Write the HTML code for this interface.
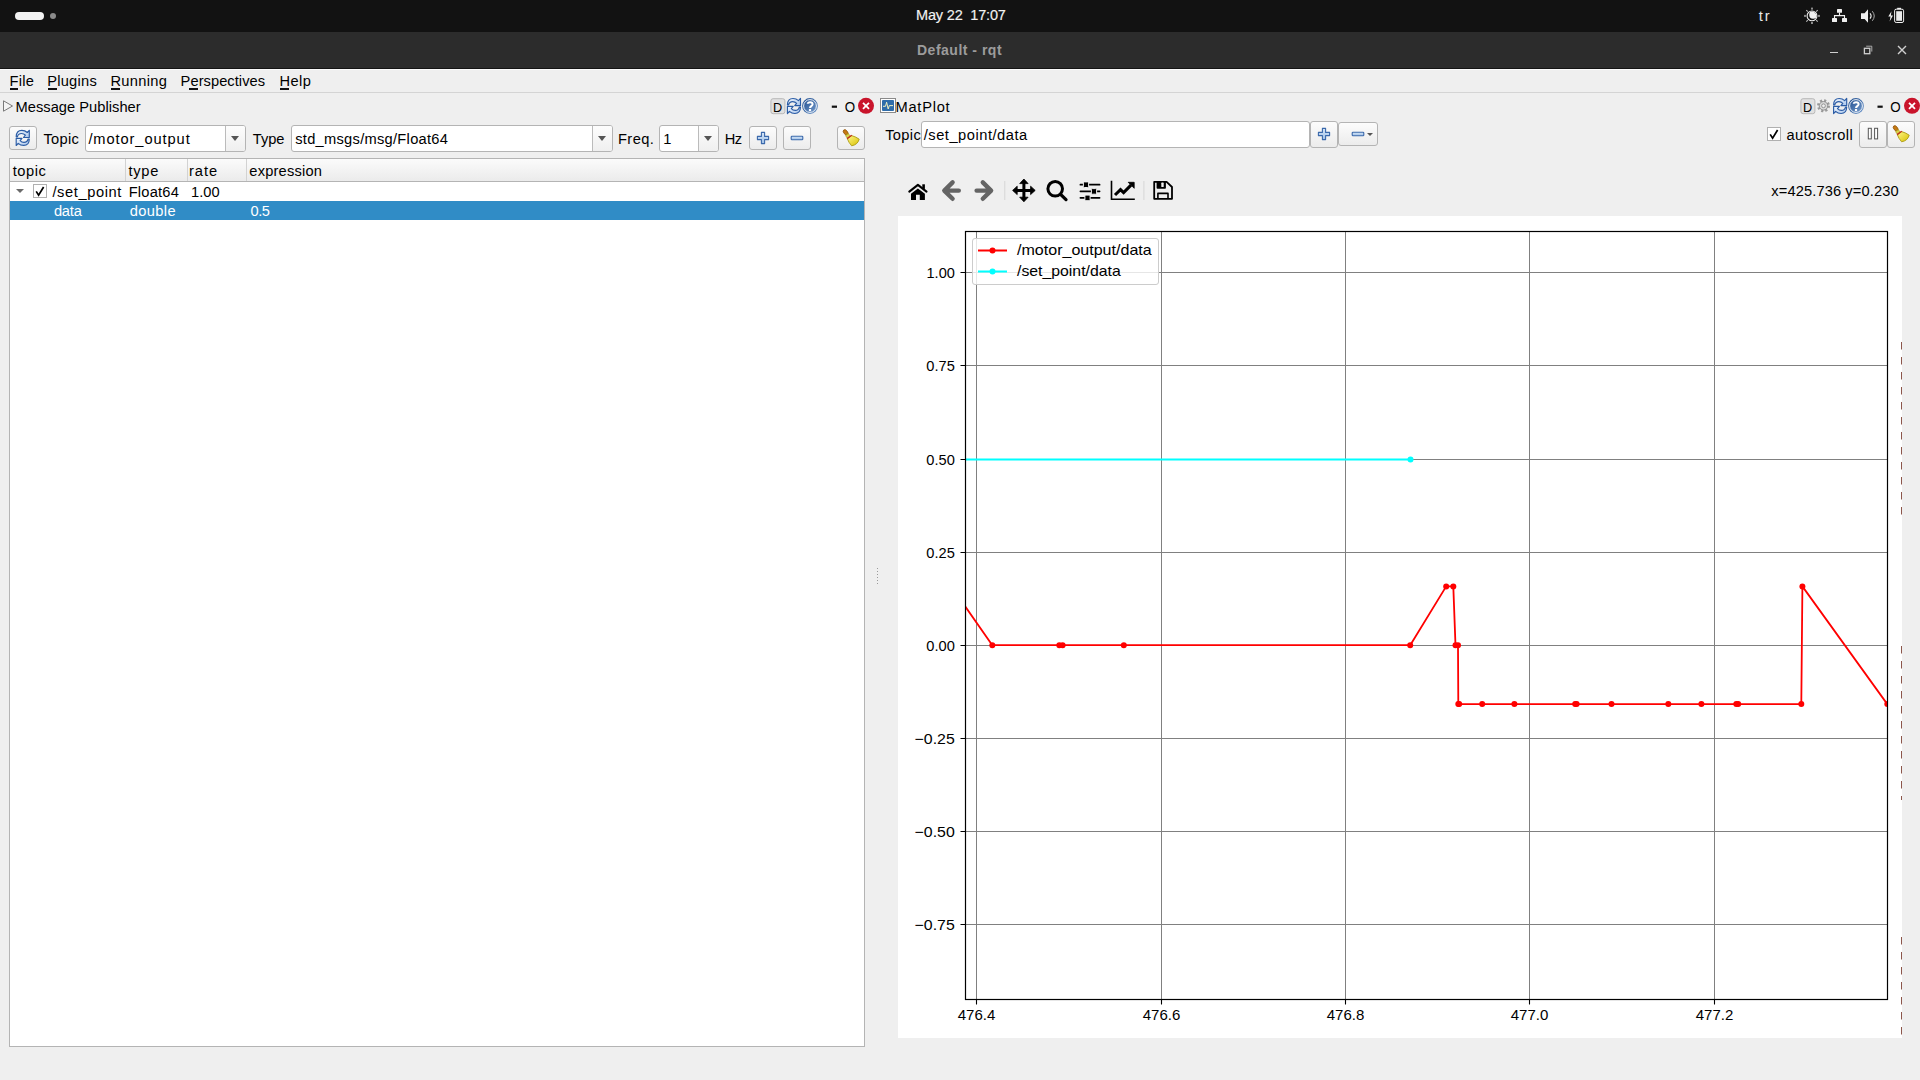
<!DOCTYPE html>
<html><head><meta charset="utf-8">
<style>
*{margin:0;padding:0;box-sizing:border-box}
html,body{width:1920px;height:1080px;overflow:hidden;background:#efefef;font-family:"Liberation Sans",sans-serif;color:#000}
.a{position:absolute}
.t{position:absolute;white-space:nowrap;line-height:1;font-family:"Liberation Sans",sans-serif}
.btn{position:absolute;border:1px solid #b4b4b4;border-radius:3px;background:linear-gradient(#fcfcfc,#ececec)}
.combo{position:absolute;border:1px solid #b4b4b4;border-radius:3px;background:#fff}
.combo .dd{position:absolute;right:0;top:0;bottom:0;width:20px;border-left:1px solid #bbbbbb;background:linear-gradient(#fdfdfd,#efefef);border-radius:0 2px 2px 0}
.arr{position:absolute;width:0;height:0;border-left:4px solid transparent;border-right:4px solid transparent;border-top:5px solid #555}
.ul{position:absolute;height:2px;background:#111;top:88px}
</style></head><body>
<!-- top bar -->
<div class="a" style="left:0;top:0;width:1920px;height:32px;background:#121212"></div>
<div class="a" style="left:15px;top:12px;width:29px;height:8px;border-radius:4px;background:#f2f2f2"></div>
<div class="a" style="left:50px;top:13px;width:6px;height:6px;border-radius:3px;background:#8a8a8a"></div>
<svg class="a" style="left:1796px;top:0" width="124" height="32" viewBox="1796 0 124 32">
<g fill="#8c8c8c"><rect x="1811" y="7.6" width="2" height="2"/><rect x="1811" y="22" width="2" height="2"/><rect x="1804" y="14.9" width="2" height="2"/><rect x="1818" y="14.9" width="2" height="2"/></g>
<path d="M1806.3 10.1L1807.8 11.6M1817.7 10.1L1816.2 11.6M1806.3 21.6L1807.8 20.1M1817.7 21.6L1816.2 20.1" stroke="#bdbdbd" stroke-width="1.1"/>
<circle cx="1812" cy="15.9" r="4.9" fill="none" stroke="#f0f0f0" stroke-width="1.1"/>
<defs><clipPath id="mc"><circle cx="1812" cy="15.9" r="4.3"/></clipPath></defs><g clip-path="url(#mc)"><circle cx="1813.1" cy="14.8" r="3.9" fill="#f0f0f0"/></g>
<g fill="#f0f0f0"><rect x="1837" y="9" width="5" height="3.8" rx="0.6"/><rect x="1832" y="18" width="5" height="4" rx="0.6"/><rect x="1842" y="18" width="5" height="4" rx="0.6"/></g>
<path d="M1839.5 12.5V15.6M1834.5 18.5V15.6H1844.5V18.5" fill="none" stroke="#f0f0f0" stroke-width="1.1"/>
<path d="M1861 13.2H1864.6L1868 9.2V22.8L1864.6 18.9H1861Z" fill="#f0f0f0"/>
<path d="M1870 13.4Q1872.2 16 1870 18.6" fill="none" stroke="#f0f0f0" stroke-width="1.1"/>
<path d="M1872.3 11.2Q1876.2 16 1872.3 20.8" fill="none" stroke="#a8a8a8" stroke-width="1"/>
<path d="M1891.5 11.2L1888.3 16.6H1890.6L1889.6 21.5L1893 15.6H1890.8Z" fill="#f0f0f0"/>
<rect x="1894.6" y="9.2" width="9" height="13.3" rx="1.6" fill="none" stroke="#f0f0f0" stroke-width="1"/>
<rect x="1897.2" y="7.8" width="3.8" height="1.4" fill="#f0f0f0"/>
<rect x="1896.2" y="11.2" width="5.8" height="9.6" fill="#ececec"/>
</svg>

<!-- title bar -->
<div class="a" style="left:0;top:32px;width:1920px;height:36px;background:#2c2c2c"></div>
<div class="a" style="left:0;top:68px;width:1920px;height:1px;background:#141414"></div>
<div class="a" style="left:0;top:69px;width:1920px;height:1px;background:#fbfbfb"></div>
<div class="a" style="left:1830px;top:51.8px;width:8.2px;height:1.4px;background:#d0d0d0"></div>
<svg class="a" style="left:1860px;top:43px" width="16" height="14" viewBox="0 0 16 14"><rect x="4.4" y="5.3" width="5.4" height="5.4" fill="none" stroke="#d0d0d0" stroke-width="1.3"/><path d="M6.2 3.2H11.8V8.6" fill="none" stroke="#b8b8b8" stroke-width="0.9"/></svg>
<svg class="a" style="left:1894px;top:42px" width="16" height="16" viewBox="0 0 16 16"><path d="M4 4L12 12M12 4L4 12" stroke="#d0d0d0" stroke-width="1.4"/></svg>
<!-- menu separator -->
<div class="a" style="left:0;top:92px;width:1920px;height:1px;background:#d4d4d4"></div>
<div class="ul" style="left:10px;width:8px"></div>
<div class="ul" style="left:48px;width:9px"></div>
<div class="ul" style="left:111px;width:9px"></div>
<div class="ul" style="left:189px;width:9px"></div>
<div class="ul" style="left:280px;width:9px"></div>

<!-- left dock title -->
<svg class="a" style="left:2px;top:99px" width="12" height="14" viewBox="0 0 12 14"><path d="M1.5 1.8L10.5 7L1.5 12.2Z" fill="#f4f4f4" stroke="#7a7a7a" stroke-width="1"/></svg>
<svg class="a" style="left:760px;top:94px" width="1160" height="24" viewBox="760 94 1160 24">
<defs><linearGradient id="rg" x1="0" y1="0" x2="1" y2="1"><stop offset="0" stop-color="#f2f7fd"/><stop offset="1" stop-color="#a9c6ec"/></linearGradient><linearGradient id="hg" x1="0" y1="0" x2="1" y2="1"><stop offset="0" stop-color="#1c4a8c"/><stop offset="1" stop-color="#7aa0d0"/></linearGradient></defs>
<rect x="770.9" y="98.7" width="14" height="15" rx="2.2" fill="#e1e1e1" stroke="#b8b8b8" stroke-width="1"/>
<text x="773.0" y="111.60000000000001" font-family="Liberation Sans" font-size="13.6" textLength="9.2" lengthAdjust="spacingAndGlyphs" fill="#000">D</text>
<g transform="translate(787 98) scale(1.0)" stroke="#2b5ca5" stroke-width="1.15" stroke-linejoin="round" fill="url(#rg)">
<path d="M0.4 6.9C0.5 2.2 3.2 0.5 6 0.5C8.6 0.5 10.3 1.5 11.5 2.6L13.5 0.4V7.6H7.7L9.6 5.3C8.6 4.2 7.3 3.6 5.7 3.6C3.5 3.6 2.1 4.8 1.6 6.9Z"/>
<path d="M13.5 9.1C13.4 13.8 10.7 15.5 7.9 15.5C5.3 15.5 3.6 14.5 2.4 13.4L0.4 15.6V8.4H6.2L4.3 10.7C5.3 11.8 6.6 12.4 8.2 12.4C10.4 12.4 11.8 11.2 12.3 9.1Z"/>
</g>
<circle cx="810" cy="106" r="7.9" fill="url(#hg)"/>
<circle cx="810" cy="106" r="6.4" fill="none" stroke="#fff" stroke-width="0.9"/>
<path d="M807.7 103.8C807.7 101.7 812.6 101.5 812.6 104.2C812.6 106 810 106.2 810 108" fill="none" stroke="#fff" stroke-width="2"/>
<rect x="808.9" y="109" width="2.2" height="2.1" fill="#fff"/>
<rect x="831.8" y="105.6" width="5.2" height="2.2" fill="#111"/>
<text x="844.7" y="111.9" font-family="Liberation Sans" font-size="14.2" textLength="10.4" lengthAdjust="spacingAndGlyphs" fill="#000">O</text>
<circle cx="866" cy="105.8" r="8" fill="#c9142b"/>
<path d="M863 102.8L869 108.8M869 102.8L863 108.8" stroke="#fff" stroke-width="1.8"/>
<rect x="880.5" y="98.5" width="15" height="14" fill="#fff" stroke="#8a8a8a" stroke-width="1"/>
<rect x="882" y="100" width="12" height="11" rx="1" fill="#2f6daa"/>
<path d="M883 106.3H885.5L886.6 102.2L888.2 109L889.3 105.6H893" fill="none" stroke="#f0f0c0" stroke-width="1"/>
<rect x="1800.9" y="98.7" width="14" height="15" rx="2.2" fill="#e1e1e1" stroke="#b8b8b8" stroke-width="1"/>
<text x="1803.0" y="111.60000000000001" font-family="Liberation Sans" font-size="13.6" textLength="9.2" lengthAdjust="spacingAndGlyphs" fill="#000">D</text>
<circle cx="1823.5" cy="105.8" r="5.3" fill="none" stroke="#9a9a9a" stroke-width="2.4" stroke-dasharray="2.1 2.06"/>
<circle cx="1823.5" cy="105.8" r="4.3" fill="#d8d8d8" stroke="#8e8e8e" stroke-width="1"/>
<circle cx="1823.5" cy="105.8" r="1.9" fill="#efefef" stroke="#8e8e8e" stroke-width="0.9"/>
<g transform="translate(1833.2 98) scale(1.0)" stroke="#2b5ca5" stroke-width="1.15" stroke-linejoin="round" fill="url(#rg)">
<path d="M0.4 6.9C0.5 2.2 3.2 0.5 6 0.5C8.6 0.5 10.3 1.5 11.5 2.6L13.5 0.4V7.6H7.7L9.6 5.3C8.6 4.2 7.3 3.6 5.7 3.6C3.5 3.6 2.1 4.8 1.6 6.9Z"/>
<path d="M13.5 9.1C13.4 13.8 10.7 15.5 7.9 15.5C5.3 15.5 3.6 14.5 2.4 13.4L0.4 15.6V8.4H6.2L4.3 10.7C5.3 11.8 6.6 12.4 8.2 12.4C10.4 12.4 11.8 11.2 12.3 9.1Z"/>
</g>
<circle cx="1856" cy="106" r="7.9" fill="url(#hg)"/>
<circle cx="1856" cy="106" r="6.4" fill="none" stroke="#fff" stroke-width="0.9"/>
<path d="M1853.7 103.8C1853.7 101.7 1858.6 101.5 1858.6 104.2C1858.6 106 1856 106.2 1856 108" fill="none" stroke="#fff" stroke-width="2"/>
<rect x="1854.9" y="109" width="2.2" height="2.1" fill="#fff"/>
<rect x="1877.5" y="105.6" width="5.2" height="2.2" fill="#111"/>
<text x="1890.2" y="111.9" font-family="Liberation Sans" font-size="14.2" textLength="10.4" lengthAdjust="spacingAndGlyphs" fill="#000">O</text>
<circle cx="1912" cy="105.8" r="8" fill="#c9142b"/>
<path d="M1909 102.8L1915 108.8M1915 102.8L1909 108.8" stroke="#fff" stroke-width="1.8"/>
</svg>

<!-- left toolbar -->
<div class="btn" style="left:9px;top:126px;width:28px;height:24px"></div>
<div class="combo" style="left:85px;top:125px;width:161px;height:27px"><div class="dd"><div class="arr" style="left:5px;top:10px"></div></div></div>
<div class="combo" style="left:291px;top:125px;width:322px;height:27px"><div class="dd"><div class="arr" style="left:5px;top:10px"></div></div></div>
<div class="combo" style="left:659px;top:125px;width:60px;height:27px"><div class="dd"><div class="arr" style="left:5px;top:10px"></div></div></div>
<div class="btn" style="left:749px;top:126px;width:28px;height:24px"></div>
<div class="btn" style="left:783px;top:126px;width:28px;height:24px"></div>
<div class="btn" style="left:837px;top:126px;width:28px;height:24px"></div>

<!-- tree -->
<div class="a" style="left:9px;top:158px;width:856px;height:889px;border:1px solid #b4b4b4;background:#fff"></div>
<div class="a" style="left:10px;top:159px;width:854px;height:22px;background:linear-gradient(#fbfbfb,#ebebeb)"></div>
<div class="a" style="left:10px;top:181px;width:854px;height:1px;background:#b4b4b4"></div>
<div class="a" style="left:125px;top:159px;width:1px;height:22px;background:#d2d2d2"></div>
<div class="a" style="left:187px;top:159px;width:1px;height:22px;background:#d2d2d2"></div>
<div class="a" style="left:246px;top:159px;width:1px;height:22px;background:#d2d2d2"></div>
<div class="a" style="left:10px;top:201px;width:854px;height:19px;background:#308cc6"></div>
<div class="arr" style="left:16px;top:189px;border-left-width:4px;border-right-width:4px;border-top:4.5px solid #6a6a6a"></div>
<div class="a" style="left:33px;top:184px;width:14px;height:14px;border:1px solid #b0b0b0;background:#fff"></div>
<svg class="a" style="left:33px;top:184px" width="14" height="14" viewBox="0 0 14 14"><path d="M3.2 7.4L5.6 11.2L10.6 3" fill="none" stroke="#000" stroke-width="1.7"/></svg>

<!-- splitter handle -->
<div class="a" style="left:877px;top:568px;width:1.4px;height:17px;background:repeating-linear-gradient(#9a9a9a 0 1.3px,transparent 1.3px 3px)"></div>

<!-- right toolbar -->
<div class="a" style="left:921px;top:121px;width:389px;height:27px;border:1px solid #b4b4b4;border-radius:3px;background:#fff"></div>
<div class="btn" style="left:1310px;top:121px;width:28px;height:27px"></div>
<div class="btn" style="left:1338px;top:122px;width:40px;height:24px"></div>
<div class="arr" style="left:1367px;top:133px;border-left-width:3px;border-right-width:3px;border-top:3px solid #555"></div>
<div class="a" style="left:1767px;top:127px;width:14px;height:14px;border:1px solid #b0b0b0;background:#fff"></div>
<svg class="a" style="left:1767px;top:127px" width="14" height="14" viewBox="0 0 14 14"><path d="M3.2 7.4L5.6 11.2L10.6 3" fill="none" stroke="#000" stroke-width="1.7"/></svg>
<div class="btn" style="left:1859px;top:121px;width:28px;height:27px"></div>
<div class="btn" style="left:1887px;top:121px;width:28px;height:27px"></div>
<svg class="a" style="left:0;top:115px" width="1920" height="40" viewBox="0 115 1920 40">
<defs><linearGradient id="rg2" x1="0" y1="0" x2="1" y2="1"><stop offset="0" stop-color="#f2f7fd"/><stop offset="1" stop-color="#a9c6ec"/></linearGradient><linearGradient id="pg" x1="0" y1="0" x2="0" y2="1"><stop offset="0" stop-color="#d6e6f8"/><stop offset="1" stop-color="#9fc0e6"/></linearGradient>
<linearGradient id="bg1" x1="0" y1="0" x2="1" y2="1"><stop offset="0" stop-color="#fff78a"/><stop offset="1" stop-color="#d8c000"/></linearGradient></defs>
<g transform="translate(15.8 129.9) scale(1.0)" stroke="#2b5ca5" stroke-width="1.15" stroke-linejoin="round" fill="url(#rg)">
<path d="M0.4 6.9C0.5 2.2 3.2 0.5 6 0.5C8.6 0.5 10.3 1.5 11.5 2.6L13.5 0.4V7.6H7.7L9.6 5.3C8.6 4.2 7.3 3.6 5.7 3.6C3.5 3.6 2.1 4.8 1.6 6.9Z"/>
<path d="M13.5 9.1C13.4 13.8 10.7 15.5 7.9 15.5C5.3 15.5 3.6 14.5 2.4 13.4L0.4 15.6V8.4H6.2L4.3 10.7C5.3 11.8 6.6 12.4 8.2 12.4C10.4 12.4 11.8 11.2 12.3 9.1Z"/>
</g>
<path d="M761.4 132.4H764.6V136.4H768.6V139.6H764.6V143.6H761.4V139.6H757.4V136.4H761.4Z" fill="url(#pg)" stroke="#3a68ab" stroke-width="1.1" stroke-linejoin="round"/>
<rect x="791.2" y="136.3" width="11.6" height="3.4" rx="0.8" fill="url(#pg)" stroke="#3a68ab" stroke-width="1.1"/>
<g transform="translate(837 126)">
<ellipse cx="8.7" cy="6.4" rx="1.9" ry="3.1" transform="rotate(-38 8.7 6.4)" fill="#c57a12" stroke="#8a4e08" stroke-width="0.7"/>
<path d="M8.6 9.6L11.2 7.6L13.6 10.4L10.6 12.6Z" fill="#d9d24a" stroke="#a59a10" stroke-width="0.7"/>
<path d="M10.4 12.8L14.6 9.6Q19 10.8 22.2 13.2Q20.6 18.8 14.6 19.8Q11.6 16.4 10.4 12.8Z" fill="url(#bg1)" stroke="#aa9a12" stroke-width="0.9" stroke-linejoin="round"/>
<path d="M10 12.6L14.8 9.3" stroke="#c0301c" stroke-width="1.3"/>
</g>
<path d="M1322.4 128.4H1325.6V132.4H1329.6V135.6H1325.6V139.6H1322.4V135.6H1318.4V132.4H1322.4Z" fill="url(#pg)" stroke="#3a68ab" stroke-width="1.1" stroke-linejoin="round"/>
<rect x="1352.2" y="132.3" width="11.6" height="3.4" rx="0.8" fill="url(#pg)" stroke="#3a68ab" stroke-width="1.1"/>
<rect x="1868.3" y="128.3" width="3" height="10.6" fill="#fff" stroke="#555" stroke-width="1"/><rect x="1874.6" y="128.3" width="3" height="10.6" fill="#fff" stroke="#555" stroke-width="1"/>
<g transform="translate(1887 122)">
<ellipse cx="8.7" cy="6.4" rx="1.9" ry="3.1" transform="rotate(-38 8.7 6.4)" fill="#c57a12" stroke="#8a4e08" stroke-width="0.7"/>
<path d="M8.6 9.6L11.2 7.6L13.6 10.4L10.6 12.6Z" fill="#d9d24a" stroke="#a59a10" stroke-width="0.7"/>
<path d="M10.4 12.8L14.6 9.6Q19 10.8 22.2 13.2Q20.6 18.8 14.6 19.8Q11.6 16.4 10.4 12.8Z" fill="url(#bg1)" stroke="#aa9a12" stroke-width="0.9" stroke-linejoin="round"/>
<path d="M10 12.6L14.8 9.3" stroke="#c0301c" stroke-width="1.3"/>
</g>
</svg>
<svg class="a" style="left:900px;top:174px" width="290" height="32" viewBox="900 174 290 32">
<!-- home -->
<path d="M909.3 191.6L917.9 184.9L926.5 191.6" fill="none" stroke="#000" stroke-width="2.1" stroke-linecap="round" stroke-linejoin="round"/>
<rect x="922.3" y="184.3" width="2.6" height="4.6" fill="#000"/>
<path d="M917.9 188.4L924.9 193.8V200H919.8V194.8H916V200H911V193.8Z" fill="#000"/>
<!-- back / forward -->
<path d="M952.6 182.4L944.3 190.6L952.6 198.8M944.6 190.6H958.8" fill="none" stroke="#646464" stroke-width="4.4" stroke-linecap="round" stroke-linejoin="round"/>
<path d="M982.8 182.4L991.1 190.6L982.8 198.8M990.8 190.6H976.6" fill="none" stroke="#646464" stroke-width="4.4" stroke-linecap="round" stroke-linejoin="round"/>
<rect x="1004.3" y="181" width="1" height="19" fill="#d6d6d6"/>
<!-- move -->
<path d="M1023.9 183V198M1016.5 190.4H1031.3" stroke="#000" stroke-width="3"/>
<path d="M1023.9 179L1028.1 183.6H1019.7Z M1023.9 201.8L1028.1 197.2H1019.7Z M1012.6 190.4L1017.2 186.2V194.6Z M1035.2 190.4L1030.6 186.2V194.6Z" fill="#000" stroke="#000" stroke-width="0.8" stroke-linejoin="round"/>
<!-- zoom -->
<circle cx="1055.2" cy="188.8" r="7.3" fill="none" stroke="#000" stroke-width="3"/>
<path d="M1060.6 194.4L1066 199.6" stroke="#000" stroke-width="3.3" stroke-linecap="round"/>
<!-- sliders -->
<path d="M1080.4 184.7H1099.6M1080.4 191.3H1099.6M1080.4 197.8H1099.6" stroke="#000" stroke-width="1.7" stroke-linecap="round"/>
<g fill="#000" stroke="#efefef" stroke-width="1"><rect x="1083.4" y="181.9" width="5.2" height="5.6" rx="1"/><rect x="1091.4" y="188.6" width="5.2" height="5.6" rx="1"/><rect x="1084.9" y="195.1" width="5.2" height="5.6" rx="1"/></g>
<!-- chart -->
<path d="M1111.5 180.7V199.2H1134.8" fill="none" stroke="#000" stroke-width="1.6"/>
<path d="M1115 195L1120.5 189.6L1123.6 192.6L1131 185.2" fill="none" stroke="#000" stroke-width="3.1" stroke-linejoin="miter"/>
<path d="M1128.2 182.3H1134.2V188.3Z" fill="#000" stroke="#000" stroke-width="0.8" stroke-linejoin="round"/>
<rect x="1143.4" y="181" width="1" height="19" fill="#d6d6d6"/>
<!-- save -->
<path d="M1154.2 181.8H1166.6L1172 187V198.8H1154.2Z" fill="none" stroke="#000" stroke-width="1.8" stroke-linejoin="round"/>
<path d="M1156.6 181.5H1165.9V187.9Q1165.9 188.7 1165.1 188.7H1157.4Q1156.6 188.7 1156.6 187.9Z" fill="#000"/>
<rect x="1161.3" y="182.6" width="2.4" height="4.4" rx="0.6" fill="#efefef"/>
<path d="M1157.9 199V193.4H1168V199" fill="none" stroke="#000" stroke-width="1.6" stroke-linejoin="round"/>
</svg>

<div class="t" style="left:916.00px;top:7.93px;font-size:14.5px;color:#f2f2f2;-webkit-text-stroke:0.15px #f2f2f2;letter-spacing:-0.167px">May 22  17:07</div>
<div class="t" style="left:917.00px;top:43.15px;font-size:14.0px;color:#9c9c9c;font-weight:bold;letter-spacing:0.500px">Default - rqt</div>
<div class="t" style="left:1758.70px;top:8.58px;font-size:14.67px;color:#e8e8e8;letter-spacing:2.100px">tr</div>
<div class="t" style="left:9.40px;top:73.58px;font-size:14.67px;color:#000000;letter-spacing:0.300px">File</div>
<div class="t" style="left:47.20px;top:73.58px;font-size:14.67px;color:#000000;letter-spacing:0.250px">Plugins</div>
<div class="t" style="left:110.50px;top:73.58px;font-size:14.67px;color:#000000;letter-spacing:0.283px">Running</div>
<div class="t" style="left:180.60px;top:73.58px;font-size:14.67px;color:#000000;letter-spacing:0.055px">Perspectives</div>
<div class="t" style="left:279.50px;top:73.58px;font-size:14.67px;color:#000000;letter-spacing:0.433px">Help</div>
<div class="t" style="left:15.50px;top:99.78px;font-size:14.67px;color:#000000;letter-spacing:0.031px">Message Publisher</div>
<div class="t" style="left:43.50px;top:131.78px;font-size:14.67px;color:#000000;letter-spacing:0.250px">Topic</div>
<div class="t" style="left:88.40px;top:131.78px;font-size:14.67px;color:#000000;letter-spacing:0.908px">/motor_output</div>
<div class="t" style="left:252.80px;top:131.78px;font-size:14.67px;color:#000000;letter-spacing:-0.033px">Type</div>
<div class="t" style="left:295.20px;top:131.78px;font-size:14.67px;color:#000000;letter-spacing:0.279px">std_msgs/msg/Float64</div>
<div class="t" style="left:618.00px;top:131.78px;font-size:14.67px;color:#000000;letter-spacing:0.400px">Freq.</div>
<div class="t" style="left:663.20px;top:131.78px;font-size:14.67px;color:#000000">1</div>
<div class="t" style="left:724.70px;top:131.78px;font-size:14.67px;color:#000000;letter-spacing:-0.600px">Hz</div>
<div class="t" style="left:12.70px;top:163.58px;font-size:14.67px;color:#000000;letter-spacing:0.525px">topic</div>
<div class="t" style="left:128.60px;top:163.58px;font-size:14.67px;color:#000000;letter-spacing:0.667px">type</div>
<div class="t" style="left:189.10px;top:163.58px;font-size:14.67px;color:#000000;letter-spacing:0.900px">rate</div>
<div class="t" style="left:249.30px;top:163.58px;font-size:14.67px;color:#000000;letter-spacing:0.200px">expression</div>
<div class="t" style="left:52.40px;top:184.78px;font-size:14.67px;color:#000000;letter-spacing:0.594px">/set_point</div>
<div class="t" style="left:128.70px;top:184.78px;font-size:14.67px;color:#000000;letter-spacing:0.217px">Float64</div>
<div class="t" style="left:191.00px;top:184.78px;font-size:14.67px;color:#000000;letter-spacing:0.033px">1.00</div>
<div class="t" style="left:53.90px;top:203.78px;font-size:14.67px;color:#ffffff;letter-spacing:-0.167px">data</div>
<div class="t" style="left:129.70px;top:203.78px;font-size:14.67px;color:#ffffff;letter-spacing:0.380px">double</div>
<div class="t" style="left:250.60px;top:203.78px;font-size:14.67px;color:#ffffff;letter-spacing:-0.550px">0.5</div>
<div class="t" style="left:895.50px;top:99.78px;font-size:14.67px;color:#000000;letter-spacing:0.750px">MatPlot</div>
<div class="t" style="left:885.20px;top:127.58px;font-size:14.67px;color:#000000;letter-spacing:0.350px">Topic</div>
<div class="t" style="left:923.75px;top:127.58px;font-size:14.67px;color:#000000;letter-spacing:0.518px">/set_point/data</div>
<div class="t" style="left:1786.50px;top:127.78px;font-size:14.67px;color:#000000;letter-spacing:0.389px">autoscroll</div>
<div class="t" style="left:1771.30px;top:183.78px;font-size:14.67px;color:#000000;letter-spacing:0.112px">x=425.736 y=0.230</div>
<svg class="a" style="left:898px;top:216px" width="1004" height="822" viewBox="898 216 1004 822">
<rect x="898" y="216" width="1004" height="822" fill="#fff"/>
<defs><clipPath id="ax"><rect x="965.5" y="231.5" width="922" height="768"/></clipPath></defs>
<path d="M976.5 231.5V999.5 M1161.5 231.5V999.5 M1345.5 231.5V999.5 M1529.5 231.5V999.5 M1714.5 231.5V999.5 M965.5 272.5H1887.5 M965.5 365.5H1887.5 M965.5 459.5H1887.5 M965.5 552.5H1887.5 M965.5 645.5H1887.5 M965.5 738.5H1887.5 M965.5 831.5H1887.5 M965.5 924.5H1887.5" stroke="#808080" stroke-width="1" fill="none"/>
<g clip-path="url(#ax)">
<path d="M951.2 586.4 L992.3 645.2 L1059.3 645.2 L1062.6 645.2 L1123.8 645.2 L1410.2 645.2 L1446.2 586.4 L1453.3 586.4 L1455.5 645.2 L1458.0 645.2 L1458.3 704.1 L1459.2 704.1 L1482.2 704.1 L1514.4 704.1 L1575.2 704.1 L1576.6 704.1 L1611.5 704.1 L1668.3 704.1 L1701.4 704.1 L1736.3 704.1 L1738.2 704.1 L1801.3 704.1 L1802.4 586.4 L1887.3 704.1" stroke="#ff0000" stroke-width="1.8" fill="none" stroke-linejoin="round"/>
<circle cx="951.2" cy="586.4" r="3" fill="#ff0000"/><circle cx="992.3" cy="645.2" r="3" fill="#ff0000"/><circle cx="1059.3" cy="645.2" r="3" fill="#ff0000"/><circle cx="1062.6" cy="645.2" r="3" fill="#ff0000"/><circle cx="1123.8" cy="645.2" r="3" fill="#ff0000"/><circle cx="1410.2" cy="645.2" r="3" fill="#ff0000"/><circle cx="1446.2" cy="586.4" r="3" fill="#ff0000"/><circle cx="1453.3" cy="586.4" r="3" fill="#ff0000"/><circle cx="1455.5" cy="645.2" r="3" fill="#ff0000"/><circle cx="1458.0" cy="645.2" r="3" fill="#ff0000"/><circle cx="1458.3" cy="704.1" r="3" fill="#ff0000"/><circle cx="1459.2" cy="704.1" r="3" fill="#ff0000"/><circle cx="1482.2" cy="704.1" r="3" fill="#ff0000"/><circle cx="1514.4" cy="704.1" r="3" fill="#ff0000"/><circle cx="1575.2" cy="704.1" r="3" fill="#ff0000"/><circle cx="1576.6" cy="704.1" r="3" fill="#ff0000"/><circle cx="1611.5" cy="704.1" r="3" fill="#ff0000"/><circle cx="1668.3" cy="704.1" r="3" fill="#ff0000"/><circle cx="1701.4" cy="704.1" r="3" fill="#ff0000"/><circle cx="1736.3" cy="704.1" r="3" fill="#ff0000"/><circle cx="1738.2" cy="704.1" r="3" fill="#ff0000"/><circle cx="1801.3" cy="704.1" r="3" fill="#ff0000"/><circle cx="1802.4" cy="586.4" r="3" fill="#ff0000"/><circle cx="1887.3" cy="704.1" r="3" fill="#ff0000"/>
<path d="M940 459.5 L1410.5 459.5" stroke="#00ffff" stroke-width="2" fill="none"/>
<circle cx="940" cy="459.5" r="3" fill="#00ffff"/><circle cx="1410.5" cy="459.5" r="3" fill="#00ffff"/>
</g>
<path d="M976.5 999.5V1004.5 M1161.5 999.5V1004.5 M1345.5 999.5V1004.5 M1529.5 999.5V1004.5 M1714.5 999.5V1004.5 M960.5 272.5H965.5 M960.5 365.5H965.5 M960.5 459.5H965.5 M960.5 552.5H965.5 M960.5 645.5H965.5 M960.5 738.5H965.5 M960.5 831.5H965.5 M960.5 924.5H965.5" stroke="#000" stroke-width="1.1" fill="none"/>
<rect x="965.5" y="231.5" width="922" height="768" fill="none" stroke="#000" stroke-width="1.2"/>
<text x="926.50" y="278.2" font-size="14.6" textLength="28.3" lengthAdjust="spacingAndGlyphs" fill="#000">1.00</text>
<text x="926.30" y="371.2" font-size="14.6" textLength="28.5" lengthAdjust="spacingAndGlyphs" fill="#000">0.75</text>
<text x="926.30" y="465.2" font-size="14.6" textLength="28.5" lengthAdjust="spacingAndGlyphs" fill="#000">0.50</text>
<text x="926.30" y="558.2" font-size="14.6" textLength="28.5" lengthAdjust="spacingAndGlyphs" fill="#000">0.25</text>
<text x="926.30" y="651.2" font-size="14.6" textLength="28.5" lengthAdjust="spacingAndGlyphs" fill="#000">0.00</text>
<text x="914.60" y="744.2" font-size="14.6" textLength="40.2" lengthAdjust="spacingAndGlyphs" fill="#000">−0.25</text>
<text x="914.60" y="837.2" font-size="14.6" textLength="40.2" lengthAdjust="spacingAndGlyphs" fill="#000">−0.50</text>
<text x="914.60" y="930.2" font-size="14.6" textLength="40.2" lengthAdjust="spacingAndGlyphs" fill="#000">−0.75</text>
<text x="957.70" y="1019.8" font-size="14.6" textLength="37.6" lengthAdjust="spacingAndGlyphs" fill="#000">476.4</text>
<text x="1142.70" y="1019.8" font-size="14.6" textLength="37.6" lengthAdjust="spacingAndGlyphs" fill="#000">476.6</text>
<text x="1326.70" y="1019.8" font-size="14.6" textLength="37.6" lengthAdjust="spacingAndGlyphs" fill="#000">476.8</text>
<text x="1510.70" y="1019.8" font-size="14.6" textLength="37.6" lengthAdjust="spacingAndGlyphs" fill="#000">477.0</text>
<text x="1695.70" y="1019.8" font-size="14.6" textLength="37.6" lengthAdjust="spacingAndGlyphs" fill="#000">477.2</text>
<rect x="972.5" y="238.5" width="186" height="46" rx="2.5" fill="#fff" fill-opacity="0.8" stroke="#cccccc" stroke-width="1"/>
<path d="M978 250.5H1007" stroke="#ff0000" stroke-width="2"/><circle cx="992.5" cy="250.5" r="3" fill="#ff0000"/>
<path d="M978 271.5H1007" stroke="#00ffff" stroke-width="2"/><circle cx="992.5" cy="271.5" r="3" fill="#00ffff"/>
<text x="1017" y="255" font-size="14.2" textLength="134.7" lengthAdjust="spacingAndGlyphs" fill="#000">/motor_output/data</text>
<text x="1017" y="275.8" font-size="14.2" textLength="103.7" lengthAdjust="spacingAndGlyphs" fill="#000">/set_point/data</text>
<path d="M1901.5 342V522M1901.5 646V800M1901.5 937V1038" stroke="#8c564b" stroke-width="1" stroke-dasharray="7.5,7.5" fill="none"/>
</svg>
</body></html>
